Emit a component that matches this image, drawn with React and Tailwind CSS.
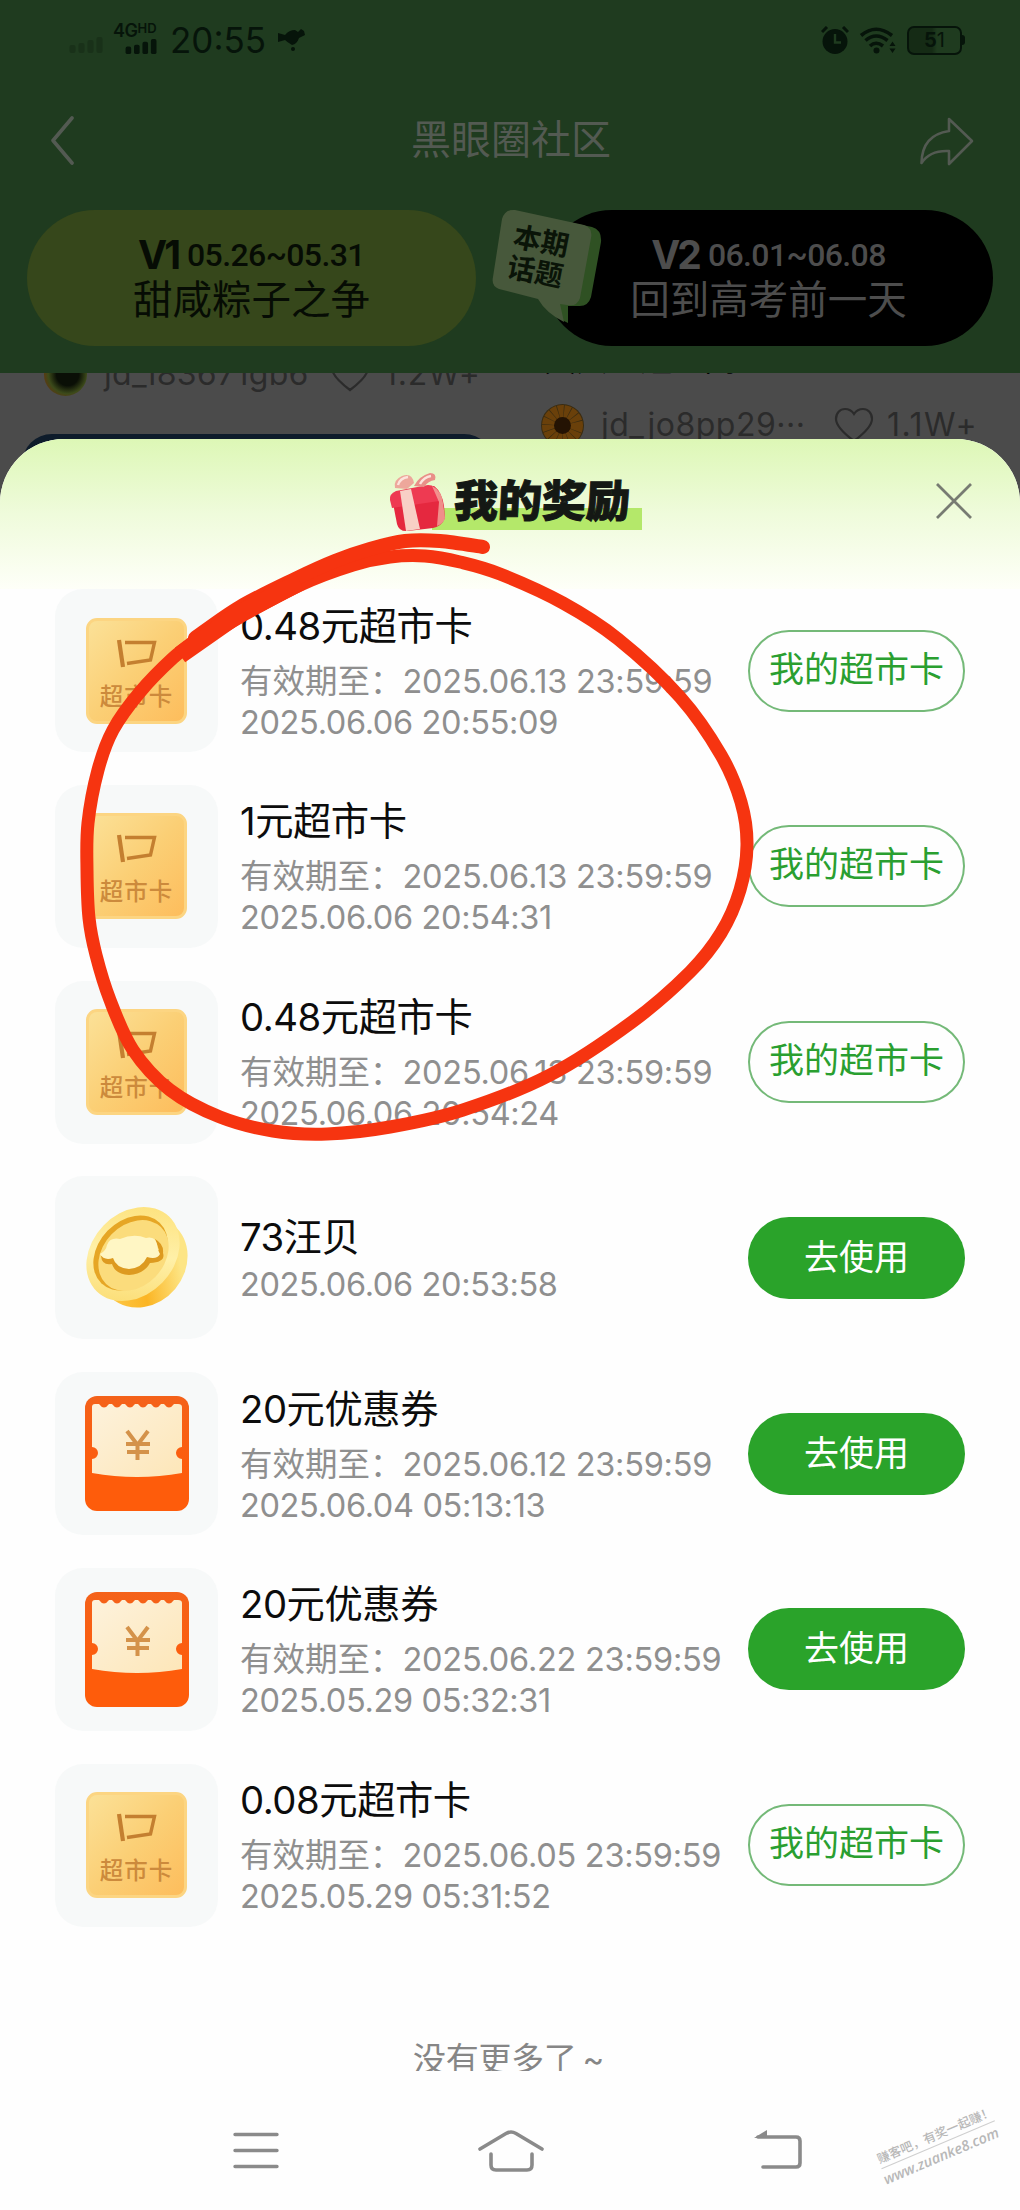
import React from "react";

const GOODS = [
  { icon: "card", title: "0.48元超市卡", until: "2025.06.13 23:59:59", time: "2025.06.06 20:55:09" },
  { icon: "card", title: "1元超市卡", until: "2025.06.13 23:59:59", time: "2025.06.06 20:54:31" },
  { icon: "card", title: "0.48元超市卡", until: "2025.06.13 23:59:59", time: "2025.06.06 20:54:24" },
  { icon: "coin", title: "73汪贝", time: "2025.06.06 20:53:58" },
  { icon: "coupon", title: "20元优惠券", until: "2025.06.12 23:59:59", time: "2025.06.04 05:13:13" },
  { icon: "coupon", title: "20元优惠券", until: "2025.06.22 23:59:59", time: "2025.05.29 05:32:31" },
  { icon: "card", title: "0.08元超市卡", until: "2025.06.05 23:59:59", time: "2025.05.29 05:31:52" },
];

function SignalBars({ className }) {
  return (
    <svg className={className} viewBox="0 0 34 16" fill="currentColor">
      <rect x="0" y="8" width="6" height="8" rx="2" />
      <rect x="9" y="6" width="6" height="10" rx="2" />
      <rect x="18" y="3" width="6" height="13" rx="2" />
      <rect x="27" y="0" width="6" height="16" rx="2" />
    </svg>
  );
}

function StatusBar() {
  return (
    <div className="flex h-[80px] items-center justify-between pr-[55px] pl-[69px] text-[#06140a]">
      <div className="flex items-center">
        <SignalBars className="mt-[10px] h-[16px] w-[35px] text-[#193119]" />
        <div className="mt-[-4px] ml-[9px] flex w-[46px] flex-col items-end">
          <div className="flex w-full items-start leading-none font-semibold">
            <span className="text-[18px] leading-[15px] tracking-[-0.500px]">4G</span>
            <span className="text-[13px] leading-[10px]">HD</span>
          </div>
          <SignalBars className="mt-px h-[15px] w-[35px]" />
        </div>
        <span className="ml-[11px] text-[35px] leading-[40px]">20:55</span>
        <svg className="ml-[11px] h-[22px] w-[29px]" viewBox="0 0 29 22" fill="currentColor">
          <path d="M1 4 L8 6 Q12 1 18 1 L21 3 L24 0 L27 2 L28 6 L22 9 Q20 15 15 16 Q10 13 8 11 L1 13 Z" />
          <circle cx="16" cy="20" r="2" />
        </svg>
      </div>
      <div className="flex items-center">
        <svg className="h-[29px] w-[28px]" viewBox="0 0 28 29">
          <circle cx="14" cy="15.5" r="12.5" fill="currentColor" />
          <path d="M1 6 L6 1 M27 6 L22 1" stroke="currentColor" strokeWidth="3" />
          <path d="M14 8 V16.5 H20" fill="none" stroke="#1f3b1f" strokeWidth="2.4" />
        </svg>
        <svg className="ml-[10px] h-[27px] w-[37px]" viewBox="0 0 37 27">
          <g fill="none" stroke="currentColor" strokeWidth="3.6">
            <path d="M2 8.5 Q17 -4 33 8.500" />
            <path d="M6.500 13.500 Q17 4.500 28.500 13.500" />
            <path d="M11 19 Q17 13.500 24 19" />
          </g>
          <circle cx="17.500" cy="23.500" r="3" fill="currentColor" />
          <path d="M30.500 19 L33.500 14.500 L36.500 19 Z M30.500 21.500 L33.500 26 L36.500 21.500 Z" fill="currentColor" />
        </svg>
        <div className="ml-[11px] flex h-[29px] w-[55px] items-center justify-center rounded-[7px] border-[2.500px] border-[#06140a] bg-linear-to-r from-[#152b15] from-45% to-transparent to-55% text-[20px] leading-none">
          <span className="font-bold">5</span>
          <span>1</span>
        </div>
        <div className="h-[10px] w-[3px] rounded-r bg-[#06140a]" />
      </div>
    </div>
  );
}

function TitleBar() {
  return (
    <div className="flex h-[120px] items-center justify-between pr-[46px] pl-[50px] text-[#535a52]">
      <svg className="h-[50px] w-[52px]" viewBox="0 0 52 50" fill="none" stroke="currentColor" strokeWidth="3.600" strokeLinecap="round" strokeLinejoin="round">
        <path d="M22 3 L3 25.500 L22 48" />
      </svg>
      <h1 className="text-[40px] leading-[50px] font-normal">黑眼圈社区</h1>
      <svg className="mt-[4px] h-[50px] w-[54px]" viewBox="0 0 54 50" fill="none" stroke="currentColor" strokeWidth="2.600" strokeLinejoin="round">
        <path d="M29 2 L52 24 L29 47 L29 34 Q10 33 1.500 46 Q2 18 29 14 Z" />
      </svg>
    </div>
  );
}

function TopicPill({ version, dates, name, className }) {
  return (
    <div className={"flex h-[136px] w-[449px] flex-col items-center rounded-full pt-[23px] " + className}>
      <div className="flex items-center gap-[9px] leading-[44px]">
        <span className="text-[39px] font-bold tracking-[-3px]">{version}</span>
        <span className="font-['Roboto'] text-[32px] font-medium tracking-[-0.600px]">{dates}</span>
      </div>
      <div className="text-[39.500px] leading-[47px]">{name}</div>
    </div>
  );
}

function TopicBubble() {
  return (
    <div className="absolute top-[205px] left-[488px] h-[122px] w-[116px]">
      <svg className="absolute inset-0" viewBox="0 0 116 122">
        <path d="M22 5 L104 22 Q114 25 113 37 L103 92 Q100 102 90 101 L80 101 L80 118 Q66 112 58 98 L30 80 Z" fill="#2f5123" />
        <path d="M27 5 L96 20 Q105 23 103 33 L92 93 Q89 102 79 100 L72 99 L76 117 Q58 108 50 94 L11 84 Q3 81 5 72 L14 14 Q17 4 27 5 Z" fill="#47583b" />
      </svg>
      <div className="absolute top-[21px] left-[22px] rotate-[11deg] text-[28px] leading-[31px] font-bold text-[#0a1408]">
        本期
        <br />
        话题
      </div>
    </div>
  );
}

function Heart() {
  return (
    <svg className="h-[36px] w-[40px]" viewBox="0 0 40 36" fill="none" stroke="currentColor" strokeWidth="2.200">
      <path d="M20 34 C12 28 2 20 2 12 C2 6 6 2 11 2 C15 2 18 4 20 7 C22 4 25 2 29 2 C34 2 38 6 38 12 C38 20 28 28 20 34 Z" />
    </svg>
  );
}

function Feed() {
  return (
    <div className="flex h-[147px] gap-[30px] overflow-hidden bg-[#4b4b4b] pl-[22px] text-[32px] text-[#2b2b2b]">
      <div className="flex w-[472px] shrink-0 flex-col">
        <div className="-mt-[21px] flex h-[44px] items-center pl-[22px]">
          <div className="size-[43px] rounded-full bg-[radial-gradient(circle_at_55%_50%,#0a0f06_35%,#3c4a1a_60%,#5a3a12_75%)]" />
          <span className="ml-[17px] w-[226px] tracking-[0.300px]">jd_183671gb6</span>
          <Heart />
          <span className="ml-[14px] tracking-[0.800px]">1.2W+</span>
        </div>
        <div className="mt-[38px] h-[100px] rounded-[30px] bg-[#0e1c2b]" />
      </div>
      <div className="flex flex-col">
        <div className="-mt-[31px] h-[33px] pl-[20px] text-[32px] leading-[36px] text-black">大六一短二高七</div>
        <div className="mt-[28px] flex h-[44px] items-center pl-[17px]">
          <svg className="size-[43px]" viewBox="0 0 43 43">
            <circle cx="21.500" cy="21.500" r="21.500" fill="#3a2c12" />
            <circle cx="21.500" cy="21.500" r="14" fill="none" stroke="#6a400a" strokeWidth="13" strokeDasharray="5 0.600" />
            <circle cx="21.500" cy="21.500" r="8.500" fill="#241303" />
          </svg>
          <span className="ml-[17px] w-[233px] tracking-[0.500px]">jd_jo8pp29···</span>
          <Heart />
          <span className="ml-[13px] tracking-[1.500px]">1.1W+</span>
        </div>
      </div>
    </div>
  );
}

function CardIcon() {
  return (
    <div className="flex h-[106px] w-[101px] flex-col items-center rounded-[11px] border-[3px] border-[#fcd582] bg-linear-to-br from-[#fbe197] via-[#fbcf75] to-[#fdbd5c] text-[#cc8a3c]">
      <svg className="mt-[18px] h-[30px] w-[42px]" viewBox="0 0 42 30" fill="none" stroke="#c47f30" strokeWidth="3.400">
        <path d="M3 1 L7 28" strokeWidth="4.200" />
        <path d="M9 3.500 H38.500 L34.500 21 L11 24.500" />
      </svg>
      <span className="mt-[13px] text-[23.500px] leading-[30px] font-medium tracking-[1px]">超市卡</span>
    </div>
  );
}

function CoinIcon() {
  return (
    <svg className="-ml-[2px] size-[104px]" viewBox="0 0 104 104">
      <defs>
        <linearGradient id="coinEdge" x1="0.900" y1="0.300" x2="0.400" y2="1">
          <stop offset="0" stopColor="#fde585" />
          <stop offset="0.500" stopColor="#fbb524" />
          <stop offset="1" stopColor="#fdc94a" />
        </linearGradient>
        <linearGradient id="coinFace" x1="0.200" y1="0" x2="0.800" y2="1">
          <stop offset="0" stopColor="#fde17a" />
          <stop offset="0.500" stopColor="#fff0a8" />
          <stop offset="1" stopColor="#fbdc72" />
        </linearGradient>
      </defs>
      <ellipse cx="59" cy="56" rx="42" ry="48" transform="rotate(40 59 56)" fill="url(#coinEdge)" />
      <ellipse cx="49" cy="48" rx="41" ry="52" transform="rotate(44 49 48)" fill="url(#coinFace)" />
      <ellipse cx="46.500" cy="47" rx="32" ry="42" transform="rotate(44 46.500 47)" fill="#e6a625" />
      <ellipse cx="49.500" cy="49.500" rx="30.500" ry="39.500" transform="rotate(44 49.500 49.500)" fill="#fbdc7c" />
      <path d="M17 50 L75 44 L71 33 Q80 38 79 47 Q82 56 66 57 Q60 68 45 69 Q31 68 28 58 Q18 60 17 50 Z" fill="#dd9a20" />
      <path d="M16 48 Q22 45 23 39 Q26 31 36 33 Q50 27 62 32 Q71 30 73 38 Q74 45 76 48 Q73 54 63 51 Q58 62 45 63 Q32 62 29 52 Q20 55 16 48 Z" fill="#fff6c4" />
    </svg>
  );
}

function CouponIcon() {
  return (
    <svg className="h-[115px] w-[104px]" viewBox="0 0 104 115">
      <defs>
        <linearGradient id="couponBack" x1="0" y1="0" x2="0" y2="1">
          <stop offset="0" stopColor="#f4621a" />
          <stop offset="0.700" stopColor="#fe5c0b" />
        </linearGradient>
        <linearGradient id="couponPaper" x1="0" y1="0" x2="1" y2="1">
          <stop offset="0" stopColor="#fdf2dc" />
          <stop offset="1" stopColor="#fde6b8" />
        </linearGradient>
      </defs>
      <rect width="104" height="115" rx="12" fill="url(#couponBack)" />
      <path
        d="M7 11 Q7 8 10 8 H14 Q19 15 24 8 H27 Q32 15 37 8 H40 Q45 15 50 8 H53 Q58 15 63 8 H66 Q71 15 76 8 H79 Q84 15 89 8 H93 Q97 8 97 11 V51 A6 6 0 0 0 97 63 V77 Q52 85 7 77 V63 A6 6 0 0 0 7 51 Z"
        fill="url(#couponPaper)"
      />
      <path d="M42 35 L52.500 49 L63 35 M52.500 48 V64 M41 48 H65 M42 56 H64" fill="none" stroke="#d4924a" strokeWidth="4" />
    </svg>
  );
}

const ICONS = { card: CardIcon, coin: CoinIcon, coupon: CouponIcon };

function RewardRow({ item }) {
  const Icon = ICONS[item.icon];
  return (
    <li className="flex h-[163px] items-center">
      <div className="flex size-[163px] shrink-0 items-center justify-center rounded-[28px] bg-[#f7f9f9]">
        <Icon />
      </div>
      <div className="ml-[22px] w-[508px] shrink-0 whitespace-nowrap">
        <div className="text-[38.300px] leading-[54px] tracking-[-0.450px] text-[#0c0c0c]">{item.title}</div>
        {item.until && (
          <div className="mt-[8px] flex text-[32.500px] leading-[41px] text-[#8f8f8f]">
            <span>有效期至：</span>
            <span className="tracking-[-0.250px]">{item.until}</span>
          </div>
        )}
        <div className="text-[32.500px] leading-[41px] tracking-[-0.350px] text-[#8f8f8f]">{item.time}</div>
      </div>
      {item.icon === "card" ? (
        <button className="h-[82px] w-[217px] rounded-full border-2 border-[#74b978] pb-[4px] text-[35px] leading-[40px] text-[#2a9f30]">我的超市卡</button>
      ) : (
        <button className="h-[82px] w-[217px] rounded-full bg-[#2aa32a] pb-[2px] text-[35px] leading-[40px] text-white">去使用</button>
      )}
    </li>
  );
}

function GiftIcon() {
  return (
    <svg className="relative h-[60px] w-[58px]" viewBox="0 0 58 60">
      <path d="M4 26 L18 18 L46 14 Q54 20 56 34 L57 46 Q54 54 45 56 L20 59 Q11 60 9 52 Z" fill="#e5283f" />
      <path d="M2 28 Q1 22 8 19 L40 13 Q48 13 50 20 L51 29 L4 36 Z" fill="#ee3a52" />
      <path d="M44 14 Q54 19 55 31 L57 46 Q55 52 49 54 L51 30 Z" fill="#f3a79d" opacity="0.800" />
      <path d="M12 19 L23 17 L32 57 L18 59 Z" fill="#f8cfc6" />
      <path d="M7 16 Q5 8 14 4 Q24 0 26 11 L19 17 Z" fill="#eda79b" />
      <path d="M26 14 Q31 4 42 1 Q49 1 47 8 Q40 9 36 15 Z" fill="#e98f88" />
      <path d="M10 13 Q12 6 20 5 M32 12 Q36 5 43 4" fill="none" stroke="#fde3dc" strokeWidth="2.500" />
    </svg>
  );
}

function SheetHeader() {
  return (
    <header className="flex h-[150px] items-start justify-between bg-linear-to-b from-[#ddf7b6] via-[#effbdb] to-[#fefff8] pt-[33px] pr-[48px] pl-[388px]">
      <div className="relative flex items-start">
        <div className="absolute top-[36px] left-[44px] h-[22px] w-[210px] bg-[#b4e86a]" />
        <GiftIcon />
        <h2 className="relative ml-[8px] -skew-x-3 text-[44px] leading-[58px] font-black text-[#141814] [-webkit-text-stroke:1px_#141814]">我的奖励</h2>
      </div>
      <svg className="mt-[11px] size-[36px]" viewBox="0 0 36 36" stroke="#777b72" strokeWidth="2.800">
        <path d="M1 1 L35 35 M35 1 L1 35" />
      </svg>
    </header>
  );
}

function NavBar() {
  return (
    <nav className="flex h-[139px] pt-[58px] pl-[233px] text-[#8a8a8a]">
      <svg className="h-[44px] w-[46px]" viewBox="0 0 46 44" stroke="currentColor" strokeWidth="3.400" strokeLinecap="round">
        <path d="M2 5.500 H44 M2 21.500 H44 M2 37.500 H44" />
      </svg>
      <svg className="ml-[198px] h-[44px] w-[68px]" viewBox="0 0 68 44" fill="none" stroke="currentColor" strokeWidth="3.600" strokeLinecap="round">
        <path d="M3 20 L29 4.500 Q34 1.500 39 4.500 L65 20" />
        <path d="M14 25 V36 Q14 41 19 41 H50 Q55 41 55 36 V25" />
      </svg>
      <svg className="ml-[209px] h-[44px] w-[50px]" viewBox="0 0 50 44" fill="none" stroke="currentColor" strokeWidth="3.600">
        <path d="M4 8 H42 Q46 8 46 12 V34 Q46 38 42 38 H9" strokeLinecap="round" />
        <path d="M0 9 L13 1 V9 Z" fill="currentColor" stroke="none" />
      </svg>
    </nav>
  );
}

function Watermark() {
  return (
    <div className="absolute top-[2125px] left-[869px] w-[140px] -rotate-[23deg] text-[#b8b8b8]">
      <div className="ml-[8px] w-[123px] border-b border-[#cfcfcf] text-center text-[12.500px] leading-[19px] font-medium whitespace-nowrap">赚客吧，有奖一起赚！</div>
      <div className="ml-[6px] font-['Open_Sans'] text-[14.500px] leading-[21px] font-semibold italic">www.zuanke8.com</div>
    </div>
  );
}

const LOOP = [
  [190, 647], [240, 617], [300, 585], [353, 565], [390, 557], [425, 556], [460, 562], [500, 574],
  [563, 603], [618, 639], [680, 697], [721, 755], [741, 802], [747, 845], [740, 890], [721, 933], [690, 972],
  [632, 1022], [550, 1075], [463, 1110], [390, 1127], [327, 1134], [273, 1131], [220, 1117], [170, 1090],
  [133, 1050], [110, 1000], [96, 955], [89, 918], [87, 870], [88, 823], [98, 770], [113, 730], [140, 692], [173, 658], [200, 637],
];
const TAIL = [[483, 547], [440, 541], [405, 541], [370, 549], [335, 561], [295, 579], [240, 607], [195, 638]];

function smooth(points) {
  let d = "M" + points[0].join(" ");
  for (let i = 0; i < points.length - 1; i++) {
    const p0 = points[i - 1] || points[i];
    const p1 = points[i];
    const p2 = points[i + 1];
    const p3 = points[i + 2] || p2;
    d += ` C${p1[0] + (p2[0] - p0[0]) / 6} ${p1[1] + (p2[1] - p0[1]) / 6} ${p2[0] - (p3[0] - p1[0]) / 6} ${p2[1] - (p3[1] - p1[1]) / 6} ${p2[0]} ${p2[1]}`;
  }
  return d;
}

function MarkerLoop() {
  return (
    <svg className="pointer-events-none absolute top-0 left-0 h-[2210px] w-[1020px]" viewBox="0 0 1020 2210" fill="none" stroke="#f63410" strokeWidth="13" strokeLinejoin="round">
      <path d={smooth(LOOP)} />
      <path d={smooth(TAIL)} strokeWidth="14" strokeLinecap="round" />
      <path d="M180 655 L240 613 L300 582" strokeWidth="18" />
    </svg>
  );
}

export default function App() {
  return (
    <div className="relative flex h-[2210px] w-[1020px] flex-col overflow-hidden bg-[#fefefe] font-['Inter','Noto_Sans_CJK_SC',sans-serif]">
      <div className="relative h-[373px] shrink-0 bg-[#1f3b1f]">
        <StatusBar />
        <TitleBar />
        <div className="mt-[10px] flex justify-between px-[27px]">
          <TopicPill version="V1" dates="05.26~05.31" name="甜咸粽子之争" className="bg-[#36471b] text-[#060c04]" />
          <TopicPill version="V2" dates="06.01~06.08" name="回到高考前一天" className="bg-black text-[#4d4d4d]" />
        </div>
        <TopicBubble />
      </div>
      <Feed />
      <section className="relative -mt-[81px] h-[1632px] shrink-0 overflow-hidden rounded-t-[64px] bg-[#fefefe]">
        <SheetHeader />
        <ul className="flex flex-col gap-[32.800px] pl-[55px]">
          {GOODS.map((item, i) => (
            <RewardRow key={i} item={item} />
          ))}
        </ul>
        <p className="mt-[106px] pr-[3px] text-center text-[33px] leading-[52px] tracking-[-0.300px] text-[#868686] [word-spacing:-3px]">没有更多了 ~</p>
      </section>
      <NavBar />
      <Watermark />
      <MarkerLoop />
    </div>
  );
}
